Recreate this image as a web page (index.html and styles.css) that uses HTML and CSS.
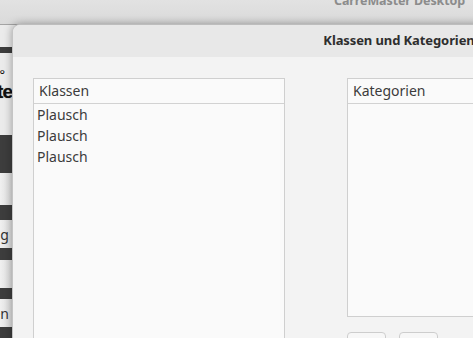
FILE: index.html
```html
<!DOCTYPE html>
<html lang="de">
<head>
    <meta charset="UTF-8">
    <meta name="viewport" content="width=device-width, initial-scale=1.0">
    <title>Klassen und Kategorien</title>
    <link rel="stylesheet" href="styles.css">
</head>
<body>
    <!-- main window behind the dialog -->
    <div class="app-window">
        <div class="app-titlebar">
            <span class="app-title">CarreMaster Desktop</span>
        </div>
        <div class="app-side">
            <div class="side-gap"></div>
            <div class="side-bar bar-top"></div>
            <div class="side-logo">
                <span class="logo-small">°</span>
                <span class="logo-big">Carte</span>
            </div>
            <div class="side-bar bar-big"></div>
            <div class="side-button blank-1"></div>
            <div class="side-bar bar-mid"></div>
            <div class="side-button"><span>Auswertung</span></div>
            <div class="side-bar bar-mid2"></div>
            <div class="side-button blank-2"></div>
            <div class="side-bar bar-mid3"></div>
            <div class="side-button"><span>Kategorien</span></div>
            <div class="side-bar bar-end"></div>
        </div>
    </div>

    <!-- dialog -->
    <div class="dialog">
        <div class="dialog-titlebar">Klassen und Kategorien</div>
        <div class="dialog-body">
            <div class="list-box list-left">
                <div class="list-header">Klassen</div>
                <ul class="list-items">
                    <li>Plausch</li>
                    <li>Plausch</li>
                    <li>Plausch</li>
                </ul>
            </div>
            <div class="right-col">
                <div class="list-box list-right">
                    <div class="list-header">Kategorien</div>
                    <ul class="list-items"></ul>
                </div>
                <div class="button-row">
                    <button class="btn"></button>
                    <button class="btn"></button>
                </div>
            </div>
        </div>
    </div>
</body>
</html>
```

FILE: styles.css
```css
/* Page */
html, body {
    margin: 0;
    padding: 0;
}
body {
    width: 473px;
    height: 338px;
    overflow: hidden;
    position: relative;
    background: #ededed;
    font-family: "Noto Sans", "DejaVu Sans", sans-serif;
    color: #3c3c3c;
}

/* Background window */
.app-window {
    width: 473px;
    height: 338px;
}
.app-titlebar {
    height: 24px;
    background: linear-gradient(#e2e2e2, #dadada);
    border-bottom: 1px solid #a4a4a4;
    position: relative;
    overflow: hidden;
}
.app-title {
    position: absolute;
    left: 334px;
    bottom: 15px;
    font-size: 12.5px;
    font-weight: bold;
    line-height: 16px;
    letter-spacing: -0.1px;
    color: #8c8c8c;
    white-space: nowrap;
}
.app-side {
    width: 12px;
    display: flex;
    flex-direction: column;
    background: #ebebeb;
    overflow: hidden;
}
.side-gap {
    height: 22px;
}
.side-bar {
    background: #3d3d3d;
    height: 6px;
}
.bar-big {
    height: 38px;
}
.bar-mid {
    height: 15px;
}
.bar-mid2 {
    height: 12px;
}
.bar-mid3 {
    height: 11px;
}
.bar-end {
    height: 12px;
}
.side-logo {
    height: 82px;
    display: flex;
    flex-direction: column;
    align-items: flex-end;
    color: #111;
}
.logo-small {
    font-size: 13px;
    line-height: 14px;
    margin-top: 14px;
    margin-right: 7px;
}
.logo-big {
    font-family: "Liberation Sans", sans-serif;
    font-size: 19px;
    font-weight: bold;
    line-height: 22px;
    letter-spacing: -1px;
    white-space: nowrap;
    margin-right: 0;
    text-shadow: 0 0 1px #777;
}
.side-button {
    height: 28px;
    display: flex;
    justify-content: flex-end;
    align-items: center;
    background: linear-gradient(90deg, #f0f0f0, #dcdcdc);
    font-size: 14px;
    white-space: nowrap;
    color: #333;
}
.side-button span {
    margin-right: 3px;
}
.blank-1 {
    height: 32px;
}
.blank-2 {
    height: 28px;
}

/* Dialog */
.dialog {
    position: absolute;
    left: 12px;
    top: 24px;
    width: 772px;
    height: 340px;
    background: #f3f3f3;
    border-left: 1px solid #c4c4c4;
    border-top: 1px solid #bdbdbd;
    border-radius: 8px 8px 0 0;
    box-shadow: 0 0 8px rgba(0, 0, 0, 0.35);
    overflow: hidden;
}
.dialog-titlebar {
    height: 32px;
    line-height: 30px;
    background: #e8e8e8;
    text-align: center;
    font-size: 13px;
    font-weight: bold;
    letter-spacing: -0.1px;
    color: #2e2e2e;
}
.dialog-body {
    display: flex;
    gap: 62px;
    padding: 21px 0 0 20px;
}

/* Lists */
.list-box {
    background: #fafafa;
    border: 1px solid #cfcfcf;
    box-sizing: border-box;
}
.list-left {
    width: 252px;
    height: 290px;
}
.list-right {
    width: 300px;
    height: 239px;
}
.list-header {
    height: 24px;
    line-height: 24px;
    font-size: 14px;
    padding-left: 5px;
    border-bottom: 1px solid #d2d2d2;
}
.list-items {
    list-style: none;
    margin: 0;
    padding: 0;
}
.list-items li {
    font-size: 14px;
    line-height: 21px;
    padding-left: 3px;
}

/* Buttons */
.right-col {
    display: flex;
    flex-direction: column;
}
.button-row {
    display: flex;
    gap: 13px;
    margin-top: 15px;
}
.btn {
    width: 39px;
    height: 28px;
    background: #f7f7f7;
    border: 1px solid #cdcdcd;
    border-radius: 4px;
    padding: 0;
}
```
